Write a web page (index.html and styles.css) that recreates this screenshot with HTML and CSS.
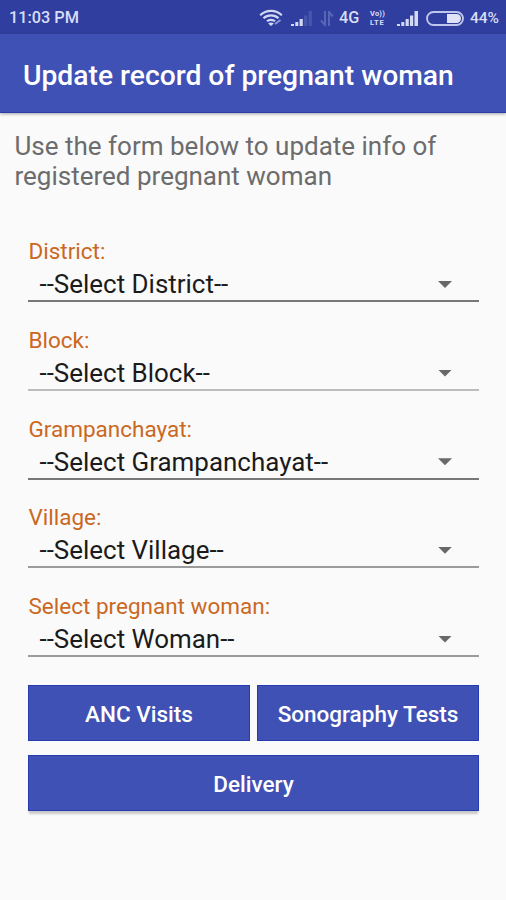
FILE: index.html
```html
<!DOCTYPE html>
<html lang="en">
<head>
<meta charset="utf-8">
<title>Update record of pregnant woman</title>
<link rel="stylesheet" href="styles.css">
</head>
<body>
<header class="status">
  <span class="clock">11:03 PM</span>
  <svg class="wifi" width="24" height="18" viewBox="0 0 24 18" fill="none" stroke="#d3d8f3" stroke-width="2.2"><path d="M1.200 6.200C7 .4 17 .4 22.800 6.200M4.500 9.300C8.500 5.500 15.500 5.500 19.500 9.300M8 12.300c2-2 6-2 8 0"/><path d="M9.200 14.500 12 17l2.800-2.500c-1.400-1.200-4.200-1.200-5.600 0z" fill="#d3d8f3" stroke="none"/><path d="m16 15 5.500-4" stroke="#8e99d6" stroke-width="2"/></svg>
  <svg class="signal-one" width="22" height="15" viewBox="0 0 22 15"><path fill="#d3d8f3" d="M0 13h3v2H0zM4.300 11h3v4h-3zM8.600 8h3.200v7H8.600z"/><path fill="#4654ac" d="M13 4.500h3.200V15H13zM17.500 0H21v15h-3.500z"/></svg>
  <svg class="data" width="14" height="15" viewBox="0 0 14 15" fill="none" stroke="#5966b6" stroke-width="2"><path d="M5 0v14L1 9.500M9 15V1l4 4.500"/></svg>
  <span class="network">4G</span>
  <span class="volte"><span class="vo">Vo))</span><span class="lte">LTE</span></span>
  <svg class="signal-two" width="22" height="15" viewBox="0 0 22 15" fill="#d3d8f3"><path d="M0 13h3v2H0zM4.300 11h3v4h-3zM8.600 8h3.200v7H8.600zM13 4.500h3.200V15H13zM17.500 0H21v15h-3.500z"/></svg>
  <svg class="battery" width="38" height="15" viewBox="0 0 38 15"><rect x="1" y="1" width="36" height="13" rx="6.500" fill="none" stroke="#bfc6ec" stroke-width="1.900"/><path d="M21 3h9.500a4.500 4.500 0 0 1 0 9H21z" fill="#e0e3f8"/></svg>
  <span class="percent">44%</span>
</header>
<div class="toolbar"><h1>Update record of pregnant woman</h1></div>
<main>
  <p class="intro">Use the form below to update info of<br>registered pregnant woman</p>
  <div class="form">
    <div class="field"><div class="label">District:</div><div class="select"><span>--Select District--</span><i class="caret"></i></div></div>
    <div class="field soft"><div class="label">Block:</div><div class="select"><span>--Select Block--</span><i class="caret"></i></div></div>
    <div class="field"><div class="label">Grampanchayat:</div><div class="select"><span>--Select Grampanchayat--</span><i class="caret"></i></div></div>
    <div class="field medium"><div class="label">Village:</div><div class="select"><span>--Select Village--</span><i class="caret"></i></div></div>
    <div class="field medium"><div class="label">Select pregnant woman:</div><div class="select"><span>--Select Woman--</span><i class="caret"></i></div></div>
    <div class="actions">
      <button>ANC Visits</button>
      <button>Sonography Tests</button>
      <button class="wide">Delivery</button>
    </div>
  </div>
</main>
</body>
</html>
```

FILE: styles.css
```css
* { box-sizing: border-box; }
body {
  margin: 0;
  height: 900px;
  overflow: hidden;
  background: #fafafa;
  font-family: Roboto, "Liberation Sans", sans-serif;
}
.status {
  display: flex;
  align-items: center;
  height: 34px;
  padding: 2px 0 0 9px;
  background: #303f9f;
  color: #d9ddf6;
  font-size: 16.3px;
  font-weight: 500;
  line-height: 20px;
  white-space: nowrap;
}
.status > * { flex: none; }
.clock { width: 250px; }
.signal-one { margin-left: 8px; }
.data { margin-left: 7px; }
.network { width: 24px; margin-left: 5px; }
.volte {
  display: flex;
  flex-direction: column;
  gap: 1px;
  width: 20px;
  margin-left: 7px;
  font-size: 7.5px;
  font-weight: 700;
  line-height: 9px;
}
.volte span { height: 8px; line-height: 8px; }
.vo { letter-spacing: .2px; }
.lte { letter-spacing: .8px; }
.signal-two { margin-left: 7px; }
.battery { margin-left: 7px; }
.percent { margin-left: 6px; font-size: 15.5px; }
.toolbar {
  display: flex;
  align-items: center;
  height: 79px;
  padding: 5px 0 0 23px;
  background: #3f51b5;
  border-bottom: 1px solid #2a3ea9;
  box-shadow: 0 1px 3px rgba(0, 0, 0, .35);
}
h1 {
  margin: 0;
  color: #fff;
  font-size: 28.25px;
  font-weight: 500;
  line-height: 32px;
  white-space: nowrap;
}
.intro {
  margin: 0;
  padding: 18px 0 0 14.5px;
  color: #6c6c6c;
  font-size: 26px;
  line-height: 30px;
  white-space: nowrap;
}
.form { padding: 47.4px 27px 0 28px; }
.field { height: 88.67px; }
.label {
  height: 26px;
  padding-left: .5px;
  color: #cb681f;
  font-size: 22.5px;
  line-height: 26px;
}
.select {
  display: flex;
  align-items: center;
  justify-content: space-between;
  height: 38px;
  padding: 4px 27px 0 11.5px;
  border-bottom: 2px solid #777;
  color: #1b1b1b;
  font-size: 25.95px;
  line-height: 30px;
  white-space: nowrap;
}
.soft .select { border-color: #bcbcbc; }
.medium .select { border-color: #9b9b9b; }
.caret {
  width: 14px;
  height: 7px;
  background: #686868;
  clip-path: polygon(0 0, 100% 0, 50% 100%);
}
.actions {
  display: grid;
  grid-template-columns: 1fr 1fr;
  gap: 14px 7px;
  padding-top: 3.8px;
}
button {
  height: 56px;
  padding: 1px 0 0;
  border: 1px solid #263baf;
  background: #3f51b5;
  color: #fff;
  font: 500 22.5px/26px Roboto, "Liberation Sans", sans-serif;
  white-space: nowrap;
}
.wide { grid-column: 1 / -1; box-shadow: 0 4px 2px -1px rgba(0, 0, 0, .2); }
```
